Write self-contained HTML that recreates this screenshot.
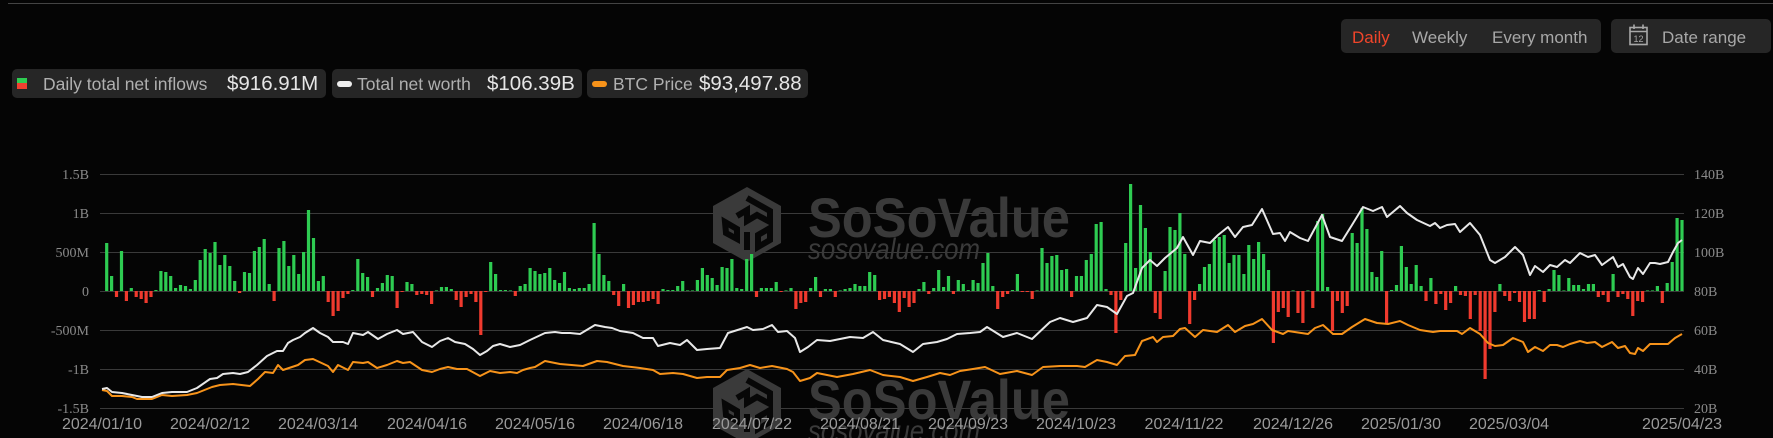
<!DOCTYPE html>
<html><head><meta charset="utf-8">
<style>
html,body{margin:0;padding:0;background:#050505;}
body{width:1773px;height:438px;position:relative;overflow:hidden;font-family:"Liberation Sans",sans-serif;}
.topline{position:absolute;left:8px;right:0;top:3px;height:1px;background:#444;}
.box{position:absolute;background:#262626;border-radius:5px;}
.t{position:absolute;white-space:nowrap;line-height:1;}
.b{font-size:17px;color:#a8a8a8;top:29px;}
.l{font-size:17.5px;letter-spacing:0;color:#b0b0b0;top:76px;}
.v{font-size:20.5px;color:#e6e6e6;top:74px;}
svg{position:absolute;left:0;top:0;}
</style></head><body>
<div class="topline"></div>
<div class="box" style="left:1341px;top:19px;width:260px;height:34px;"></div>
<div class="box" style="left:1611px;top:19px;width:160px;height:34px;"></div>
<span class="t b" style="left:1352px;color:#f0452a;">Daily</span>
<span class="t b" style="left:1412px;">Weekly</span>
<span class="t b" style="left:1492px;">Every month</span>
<svg width="20" height="22" style="left:1629px;top:24px;" viewBox="0 0 20 22"><rect x="1" y="3.5" width="17" height="17" fill="none" stroke="#a8a8a8" stroke-width="1.6"/><line x1="1" y1="7.5" x2="18" y2="7.5" stroke="#a8a8a8" stroke-width="1.6"/><line x1="5" y1="0.5" x2="5" y2="5" stroke="#a8a8a8" stroke-width="1.6"/><line x1="14" y1="0.5" x2="14" y2="5" stroke="#a8a8a8" stroke-width="1.6"/><text x="9.5" y="18" font-size="9" fill="#a8a8a8" text-anchor="middle" font-family="Liberation Sans">12</text></svg>
<span class="t b" style="left:1662px;">Date range</span>

<div class="box" style="left:12px;top:69px;width:314px;height:29px;"></div>
<div class="box" style="left:332px;top:69px;width:250px;height:29px;"></div>
<div class="box" style="left:587px;top:69px;width:221px;height:29px;"></div>
<div style="position:absolute;left:17px;top:78px;width:10px;height:5px;background:#2ecc52"></div>
<div style="position:absolute;left:17px;top:83px;width:10px;height:6px;background:#f04030"></div>
<span class="t l" style="left:43px;">Daily total net inflows</span>
<span class="t v" style="left:227px;">$916.91M</span>
<div style="position:absolute;left:337px;top:81px;width:15px;height:6px;border-radius:3px;background:#eee"></div>
<span class="t l" style="left:357px;">Total net worth</span>
<span class="t v" style="left:487px;">$106.39B</span>
<div style="position:absolute;left:592px;top:81px;width:15px;height:6px;border-radius:3px;background:#f7931a"></div>
<span class="t l" style="left:613px;">BTC Price</span>
<span class="t v" style="left:699px;">$93,497.88</span>
<svg id="c" width="1773" height="438"></svg>
<script>
var s=document.getElementById('c'),h='';
var gy=[174,213,252,291,330,369,408],ll=['1.5B','1B','500M','0','-500M','-1B','-1.5B'],rl=['140B','120B','100B','80B','60B','40B','20B'];
for(var i=0;i<7;i++){h+='<line x1="100" x2="1684" y1="'+(gy[i]+.5)+'" y2="'+(gy[i]+.5)+'" stroke="#3a3a3a" stroke-width="1"/>';
h+='<text x="89" y="'+(gy[i]+5)+'" text-anchor="end" font-family="Liberation Serif" font-size="14" fill="#8a8a8a">'+ll[i]+'</text>';
h+='<text x="1694" y="'+(gy[i]+5)+'" font-family="Liberation Serif" font-size="14" fill="#8a8a8a">'+rl[i]+'</text>';}
function wm(dy){var g='<g transform="translate(0,'+dy+')">';
g+='<polygon points="747,187 781,206 781,243 747,262 713,243 713,206" fill="#3a3a3a"/>';
g+='<path d="M747,198 L770,211 L770,222 L757,215 L747,221 L747,210 L737,216 M725,222 L737,229 L737,239 L726,233 Z M770,228 L770,240 L758,247 L758,235 Z M747,232 L747,250" stroke="#070707" stroke-width="6" fill="none"/>';
g+='<text x="808" y="237" font-family="Liberation Sans" font-weight="bold" font-size="56" fill="#3a3a3a" textLength="262" lengthAdjust="spacingAndGlyphs">SoSoValue</text>';
g+='<text x="808" y="259" font-family="Liberation Sans" font-style="italic" font-size="30" fill="#3a3a3a" textLength="172" lengthAdjust="spacingAndGlyphs">sosovalue.com</text></g>';return g;}
h+=wm(0)+wm(182);
var b=[48,15,-6,40,-10,3,-6,-8,-12,-6,1,20,19,15,3,6,5,2,11,31,42,38,49,26,36,25,10,-2,19,18,40,44,52,7,-10,43,50,25,36,17,39,81,53,10,15,-11,-25,-20,-7,-3,1,32,18,14,-6,3,8,16,15,-17,-1,9,7,-4,-3,-4,-13,0,4,4,2,-9,-16,-6,-3,-11,-44,-1,29,17,
1,1,0,-5,5,7,23,20,17,18,23,11,8,19,3,2,3,3,7,68,37,16,10,-4,-15,7,-17,-14,-11,-11,-10,-8,-13,2,1,1,5,10,0,0,11,23,16,13,6,24,23,32,3,2,32,37,-6,3,3,3,9,-1,0,3,-18,-12,-11,3,14,-6,2,2,-6,0,2,3,7,5,5,19,16,-9,-8,-6,-12,-21,-7,-16,-12,2,9,-3,3,21,4,15,-3,11,7,1,11,8,
28,38,5,-18,-6,-3,1,17,-1,-1,-8,0,43,28,35,36,21,22,-6,15,15,31,37,67,69,2,-4,-42,-9,48,107,23,86,63,39,-22,-28,20,64,61,78,37,-33,-9,7,24,27,51,54,56,28,36,36,17,46,32,49,37,21,-52,-21,-17,-26,0,-22,-32,0,-17,70,77,4,-40,-10,-22,-15,58,48,83,62,19,14,40,-33,1,6,45,24,
7,26,5,-10,13,-13,-3,-19,-12,5,-4,-5,-28,-4,-40,-88,-58,-21,7,-5,-10,-2,-11,-31,-28,-28,1,-11,2,21,16,0,13,6,6,2,7,7,-6,-4,-11,17,-6,-3,-8,-25,-10,-11,0,0,5,-12,8,29,73,71];
var n=b.length,x0=106.7,x1=1682,st=(x1-x0)/(n-1);
for(var i=0;i<n;i++){var v=b[i];if(v==0)v=0.6;var x=x0+i*st-1.6;
if(v>0)h+='<rect x="'+x.toFixed(1)+'" y="'+(291-v)+'" width="3.2" height="'+v+'" fill="#2ecc52"/>';
else h+='<rect x="'+x.toFixed(1)+'" y="291" width="3.2" height="'+(-v)+'" fill="#f03a2e"/>';}
var W="102,389 107,388 112,392 122,393 132,395 142,397 152,397 162,393 172,392 187,392 197,388 210,379 217,378 223,374 233,373 240,374 248,372 257,365 267,356 277,351 283,351 288,343 293,340 300,337 305,333 313,328 320,333 328,337 333,342 343,342 348,344 353,333 363,335 368,332 378,339 387,334 397,330 403,334 413,332 422,342 432,347 440,341 448,338 455,342 465,344 473,349 480,355 487,351 493,346 500,344 510,347 520,345 530,340 545,333 555,332 562,333 570,333 580,334 595,325 605,327 612,328 620,331 633,333 643,338 653,338 658,346 670,343 680,345 687,340 697,350 707,349 720,348 728,333 747,327 753,330 763,329 772,325 778,332 787,331 795,338 800,352 808,347 817,340 830,341 840,339 850,337 863,338 873,332 883,340 900,344 913,352 923,344 937,342 947,339 957,334 970,333 980,332 987,327 1003,337 1017,333 1032,339 1050,322 1060,318 1073,322 1087,318 1097,305 1107,307 1117,314 1127,296 1133,293 1142,268 1150,260 1157,266 1165,258 1177,248 1183,237 1193,255 1200,241 1210,243 1218,235 1228,227 1235,237 1243,227 1252,225 1262,209 1273,234 1280,233 1285,241 1290,232 1300,238 1308,241 1322,215 1330,237 1342,241 1352,225 1363,207 1373,211 1382,207 1387,217 1400,206 1407,213 1417,220 1430,226 1435,223 1440,228 1447,225 1455,224 1460,232 1470,223 1480,235 1490,260 1495,263 1505,257 1515,247 1523,255 1530,275 1535,266 1543,272 1550,265 1557,267 1565,260 1570,263 1580,253 1588,257 1595,255 1602,265 1613,257 1618,267 1623,264 1630,277 1633,279 1638,268 1643,274 1650,263 1655,263 1660,264 1668,262 1673,252 1678,243 1682,240";
var O="102,390 107,391 112,396 122,396 132,397 137,399 152,399 162,395 172,396 187,395 197,393 207,389 212,387 220,385 233,384 250,386 258,379 265,372 273,373 278,365 283,370 292,367 298,365 305,360 313,359 328,366 333,372 338,365 348,370 353,362 363,363 368,362 377,368 387,365 397,361 403,363 410,362 422,370 432,372 440,369 448,367 457,369 467,369 480,376 490,371 500,373 510,372 517,373 523,370 530,368 535,367 545,361 560,364 583,366 597,361 607,362 623,366 640,368 653,370 660,374 673,373 683,374 697,378 707,377 720,377 727,370 740,368 750,365 760,368 772,366 787,369 793,372 800,381 810,378 817,373 827,375 837,377 853,374 870,370 883,375 900,377 913,381 927,377 940,373 950,375 960,371 973,369 985,367 1000,374 1017,371 1032,375 1043,367 1060,366 1077,366 1085,367 1097,360 1107,362 1117,365 1125,356 1135,355 1142,341 1153,337 1157,342 1163,337 1173,336 1180,329 1185,328 1195,337 1203,330 1217,332 1228,325 1235,332 1245,326 1253,324 1262,319 1272,330 1283,334 1288,331 1308,334 1315,328 1323,325 1333,334 1342,334 1352,327 1365,319 1377,323 1388,324 1400,321 1408,325 1420,330 1433,332 1440,331 1447,331 1457,331 1462,334 1470,328 1480,334 1488,343 1495,346 1503,345 1513,338 1523,342 1528,352 1535,347 1543,351 1550,345 1557,345 1563,347 1570,344 1580,341 1587,343 1595,342 1602,347 1612,342 1618,348 1625,346 1630,353 1635,354 1638,348 1643,351 1650,344 1658,344 1668,344 1675,338 1682,334";
h+='<polyline points="'+O+'" fill="none" stroke="#f7931a" stroke-width="2" stroke-linejoin="round"/>';
h+='<polyline points="'+W+'" fill="none" stroke="#e8e8e8" stroke-width="2" stroke-linejoin="round"/>';
var xl=[[102,'2024/01/10'],[210,'2024/02/12'],[318,'2024/03/14'],[427,'2024/04/16'],[535,'2024/05/16'],[643,'2024/06/18'],[752,'2024/07/22'],[860,'2024/08/21'],[968,'2024/09/23'],[1076,'2024/10/23'],[1184,'2024/11/22'],[1293,'2024/12/26'],[1401,'2025/01/30'],[1509,'2025/03/04'],[1682,'2025/04/23']];
for(var i=0;i<xl.length;i++)h+='<text x="'+xl[i][0]+'" y="429" text-anchor="middle" font-family="Liberation Sans" font-size="16" fill="#9a9a9a">'+xl[i][1]+'</text>';
s.innerHTML=h;
</script>
</body></html>
